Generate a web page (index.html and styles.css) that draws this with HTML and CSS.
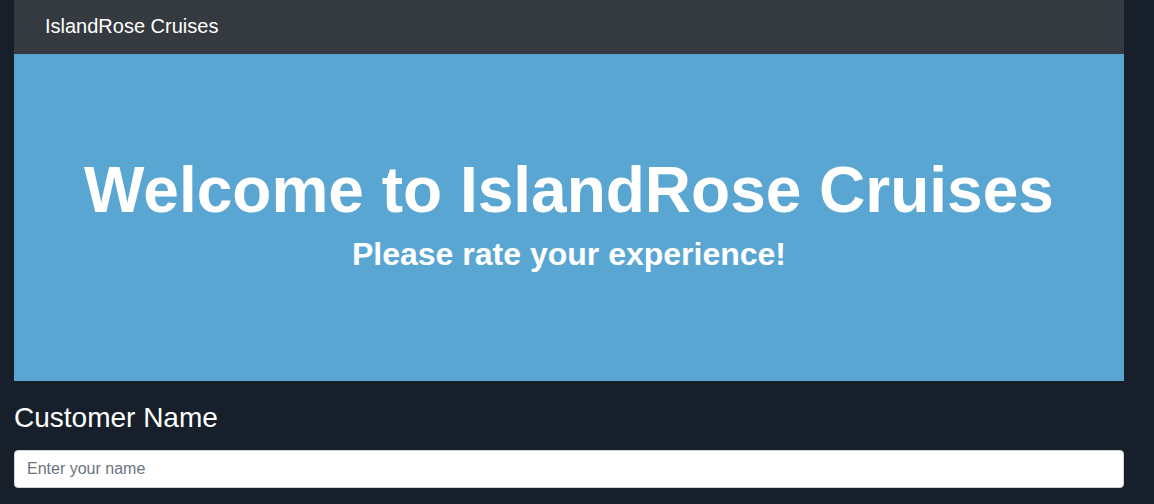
FILE: index.html
```html
<!DOCTYPE html>
<html lang="en">
<head>
<meta charset="utf-8">
<title>IslandRose Cruises</title>
<link rel="stylesheet" href="styles.css">
</head>
<body>
<div class="page">
  <nav class="navbar">
    <span class="brand">IslandRose Cruises</span>
  </nav>
  <header class="hero">
    <h1 class="hero-title">Welcome to IslandRose Cruises</h1>
    <h2 class="hero-sub">Please rate your experience!</h2>
  </header>
  <form class="form">
    <label class="label" for="name">Customer Name</label>
    <input class="input" id="name" type="text" placeholder="Enter your name">
  </form>
</div>
</body>
</html>
```
FILE: styles.css
```css
html, body {
  margin: 0;
  padding: 0;
}
body {
  background: #17202a;
  font-family: "Liberation Sans", Arial, sans-serif;
  color: #fff;
  overflow: hidden;
}
.page {
  width: 1110px;
  margin-left: 14px;
}
.navbar {
  height: 54px;
  background: #343a40;
  display: flex;
  align-items: center;
  padding: 0 31px 2px;
  box-sizing: border-box;
}
.brand {
  font-size: 20px;
  line-height: 30px;
  color: #fff;
}
.hero {
  height: 327px;
  box-sizing: border-box;
  background: #5aa6d3;
  padding-top: 98px;
  text-align: center;
}
.hero-title {
  margin: 0 0 6px;
  font-size: 64px;
  line-height: 1.2;
  font-weight: 700;
}
.hero-sub {
  margin: 0;
  font-size: 32px;
  line-height: 1.2;
  font-weight: 700;
}
.form {
  display: flex;
  flex-direction: column;
}
.label {
  margin: 20px 0 15px;
  font-size: 28px;
  line-height: 1.2;
}
.input {
  height: 38px;
  box-sizing: border-box;
  border: 1px solid #ced4da;
  border-radius: 4px;
  padding: 6px 12px;
  font-family: "Liberation Sans", Arial, sans-serif;
  font-size: 16px;
  color: #495057;
  background: #fff;
  margin: 0;
}
.input::placeholder {
  color: #6c757d;
}
```
